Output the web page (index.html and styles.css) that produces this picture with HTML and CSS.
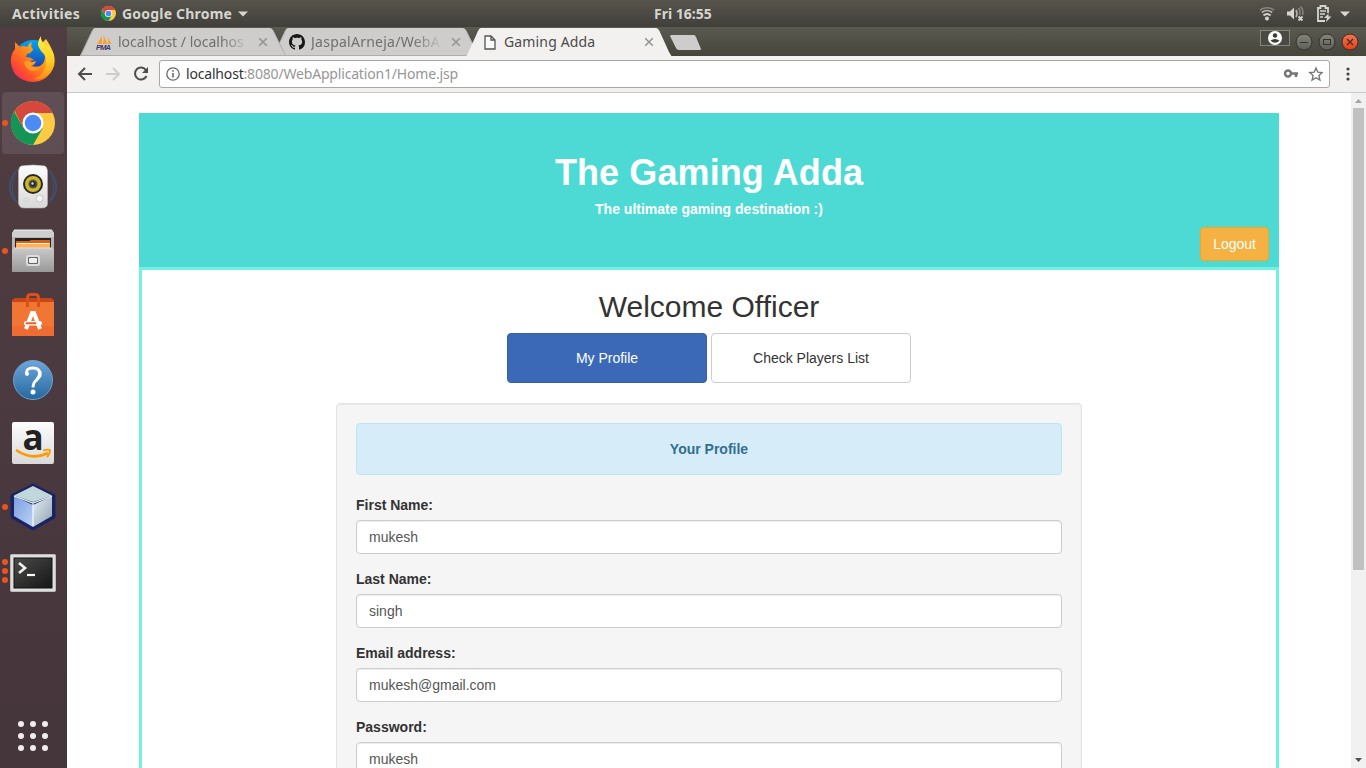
FILE: index.html
```html
<!DOCTYPE html>
<html lang="en">
<head>
<meta charset="utf-8">
<title>Gaming Adda</title>
<link rel="stylesheet" href="styles.css">
</head>
<body>
<svg width="0" height="0" class="defs">
  <defs>
    <symbol id="chrome" viewBox="0 0 44 44">
      <circle cx="22" cy="22" r="22" fill="#fccb43"/>
      <path d="M3.200 10.500A22 22 0 0 0 22 44L31.500 27.500 22 22 12.500 27Z" fill="#149556"/>
      <path d="M3.600 10 13 28 22 22V12H41.600A22 22 0 0 0 3.600 10Z" fill="#d5493c"/>
      <circle cx="22" cy="22" r="10.500" fill="#fff"/>
      <circle cx="22" cy="22" r="8.300" fill="#4c8bf5"/>
    </symbol>
    <symbol id="close" viewBox="0 0 10 10"><path d="M1.200 1.200 8.800 8.800M8.800 1.200 1.200 8.800" stroke="#949392" stroke-width="1.500"/></symbol>
    <symbol id="tab-shape" viewBox="0 0 208 29"><path d="M0 28.500C1.500 28 1.500 27 2.500 25L12 4Q13.200 1 15 1H190Q192 1 193.500 4L203 24.500 205.500 28.500Z" fill="#cfcdcb"/><path d="M.5 28.500 12.500 3.500M193 3.500 205.500 28.500M0 28.500H206" fill="none" stroke="#aeadab"/></symbol>
    <linearGradient id="fox" x1="1" y1="0" x2="0" y2="1"><stop offset="0" stop-color="#fff04a"/><stop offset=".4" stop-color="#ff9a18"/><stop offset=".75" stop-color="#ff4a2f"/><stop offset="1" stop-color="#e3168a"/></linearGradient>
    <linearGradient id="globe" x1="0" y1="0" x2="0" y2="1"><stop offset="0" stop-color="#00a5f5"/><stop offset="1" stop-color="#2a1f8c"/></linearGradient>
    <linearGradient id="flame" x1="0" y1="0" x2="0" y2="1"><stop offset="0" stop-color="#fff04a"/><stop offset=".6" stop-color="#ffcb20"/><stop offset="1" stop-color="#ff8b16"/></linearGradient>
    <linearGradient id="silver" x1="0" y1="0" x2="0" y2="1"><stop offset="0" stop-color="#c9c9c9"/><stop offset="1" stop-color="#999999"/></linearGradient>
    <linearGradient id="white" x1="0" y1="0" x2="0" y2="1"><stop offset="0" stop-color="#fdfdfd"/><stop offset="1" stop-color="#d9d9d9"/></linearGradient>
    <linearGradient id="help" x1="0" y1="0" x2="0" y2="1"><stop offset="0" stop-color="#6fa5da"/><stop offset="1" stop-color="#2369a0"/></linearGradient>
    <linearGradient id="cubeL" x1="0" y1="0" x2="1" y2="1"><stop offset="0" stop-color="#7b9ee0"/><stop offset="1" stop-color="#bdd3f7"/></linearGradient>
    <linearGradient id="cubeR" x1="0" y1="0" x2="1" y2="1"><stop offset="0" stop-color="#e6eef4"/><stop offset="1" stop-color="#8fa3b0"/></linearGradient>
    <linearGradient id="term" x1="0" y1="0" x2="1" y2="1"><stop offset="0" stop-color="#4b4c4a"/><stop offset="1" stop-color="#151615"/></linearGradient>
    <linearGradient id="knob" x1="0" y1="0" x2="0" y2="1"><stop offset="0" stop-color="#84847c"/><stop offset="1" stop-color="#60605a"/></linearGradient>
    <linearGradient id="redknob" x1="0" y1="0" x2="0" y2="1"><stop offset="0" stop-color="#f4744f"/><stop offset="1" stop-color="#ee3d13"/></linearGradient>
  </defs>
</svg>

<div class="desktop">
  <header class="topbar">
    <span class="activities">Activities</span>
    <svg class="mini-chrome" width="15" height="15"><use href="#chrome"/></svg>
    <span class="app-name">Google Chrome</span>
    <svg class="app-arrow" width="10" height="6"><path d="M0 .5H10L5 5.500Z" fill="#d6d5cf"/></svg>
    <span class="clock">Fri 16:55</span>
    <svg class="tray" width="94" height="18" viewBox="0 0 94 18" fill="none">
      <circle cx="7" cy="13.500" r="2" fill="#d6d5cf"/>
      <path d="M3.500 10.500Q7 7.500 10.500 10.500" stroke="#d6d5cf" stroke-width="2"/>
      <path d="M1.800 7.500Q7 3.500 12.200 7.500" stroke="#b5b4ae" stroke-width="1.600"/>
      <path d="M0 5Q7 .5 14 5" stroke="#86857f" stroke-width="1.500"/>
      <path d="M27 6.500H30L34 2.500V14.500L30 10.500H27Z" fill="#d6d5cf"/>
      <path d="M36 5Q38 8.500 36 12" stroke="#b5b4ae" stroke-width="1.600"/>
      <path d="M38.500 3Q41 7 39.500 10M40.500 1.500Q44 5 42.500 10" stroke="#86857f" stroke-width="1.500"/>
      <path d="M38.500 11.500 42.500 15.500M42.500 11.500 38.500 15.500" stroke="#d6d5cf" stroke-width="1.800"/>
      <path d="M65 16H58V3H60.500V1H65.500V3H68V8" stroke="#d6d5cf" stroke-width="1.800"/>
      <path d="M60 6H66M60 9H65M60 12H63" stroke="#d6d5cf" stroke-width="1.600"/>
      <path d="M68.500 8.500 64 13H67L66 17 71.500 11.500H68.500Z" fill="#d6d5cf"/>
      <path d="M80 6.500H90L85 11.500Z" fill="#d6d5cf"/>
    </svg>
  </header>

  <div class="workspace">
    <nav class="dock">
      <div class="app">
        <svg width="46" height="48" viewBox="0 0 46 48">
          <circle cx="23" cy="24" r="19" fill="url(#globe)"/>
          <path d="M5 7Q8 10 10 12Q13 10 17 12Q19 8 22 7Q20 12 23 14L23 15Q21 18 17 19L16 22Q21 22 24 25Q19 26 18 28Q22 33 30 31Q36 28 35 18L32 8L36 4Q47 20 44 31Q38 47 22 47Q3 45 1 28Q0 20 5 14Z" fill="url(#fox)"/>
          <path d="M31 1Q30 7 38 11Q46 17 44 29Q43 36 38 40Q33 45 24 44Q35 40 36 29Q37 21 31 16Q25 9 31 1Z" fill="url(#flame)"/>
          <path d="M14 27Q18 25 22 27L26 26Q25 30 21 31Q26 34 31 31Q27 38 19 35Q15 32 14 27Z" fill="#ff9b22"/>
        </svg>
      </div>
      <div class="app active"><i class="dots"><b></b></i>
        <svg width="44" height="44"><use href="#chrome"/></svg>
      </div>
      <div class="app">
        <svg width="50" height="46" viewBox="0 0 50 46">
          <path d="M7 8Q-4 23 7 37M5 11Q-1 23 5 34M9 5Q0 23 9 39M43 8Q54 23 43 37M45 11Q51 23 45 34M41 5Q50 23 41 39" fill="none" stroke="#3d5173" stroke-width="1.200"/>
          <path d="M13 2Q25 0 37 2Q39 3 39.500 7V40Q39 44 34 44H16Q11 44 10.500 39V7Q11 3 13 2Z" fill="url(#white)" stroke="#b5b5b5" stroke-width=".6"/>
          <circle cx="25" cy="20" r="10" fill="#26282b"/><circle cx="25" cy="20" r="8" fill="#d0b629"/><circle cx="25" cy="20" r="4.600" fill="#55564b"/><circle cx="25" cy="20" r="2.800" fill="#252a31"/><circle cx="24.500" cy="19.500" r="1.200" fill="#ddd"/>
          <circle cx="31.500" cy="34.500" r="3.500" fill="#f4f4f4" stroke="#c5c5c5"/><path d="M16 34H20V38H16Z" fill="none" stroke="#d4d4d4"/>
        </svg>
      </div>
      <div class="app"><i class="dots"><b></b></i>
        <svg width="44" height="46" viewBox="0 0 44 46">
          <path d="M3 2H41L43 5V42H1V5Z" fill="#b5b5b5"/><path d="M3 2H41L43 5V9H1V5Z" fill="#cfcfcf"/><path d="M3 2H41" stroke="#eee"/>
          <rect x="4" y="10" width="36" height="10" fill="#252423"/>
          <path d="M5 13H18L20 12H39V20H5Z" fill="#d85f18"/><rect x="5" y="15" width="34" height="5" fill="#ffb15c"/><path d="M6 15.500H38" stroke="#fff2d9"/>
          <path d="M3 20H41L43 22V44H1V22Z" fill="url(#silver)"/><path d="M3 20H41" stroke="#dedede"/>
          <rect x="15" y="27" width="14" height="11" rx="2.500" fill="#ddd"/><rect x="17" y="29" width="10" height="7" rx="1" fill="#666"/><rect x="18" y="30" width="8" height="5" rx="1" fill="#eee"/>
        </svg>
      </div>
      <div class="app">
        <svg width="42" height="44" viewBox="0 0 42 44">
          <path d="M0 7H42V43H0Z" fill="#ee6c31"/><path d="M0 9H42V33H0Z" fill="#f17634"/><path d="M0 7 3 5H39L42 7V9H0Z" fill="#c74715"/>
          <path d="M15.500 14V5Q15.500 1.500 19 1.500H23Q26.500 1.500 26.500 5V14" fill="none" stroke="#df4f18" stroke-width="3"/>
          <path d="M14 36 20 20H22L28 36" fill="none" stroke="#fff" stroke-width="4"/><rect x="12" y="28" width="18" height="4.500" rx="2.200" fill="#fff"/><rect x="13.500" y="29.300" width="11" height="2" rx="1" fill="#ec6227"/>
        </svg>
      </div>
      <div class="app">
        <svg class="help" width="42" height="42" viewBox="0 0 42 42"><circle cx="21" cy="21" r="19.500" fill="url(#help)" stroke="#729fca"/><path d="M14.300 14.500Q14 9 21 9Q27.500 9 27.500 14.500Q27.500 18 24 21.500Q21 24 21 28.500" fill="none" stroke="#fff" stroke-width="2.800"/><path d="M25 10Q30 12 28.500 17L24.500 22" fill="none" stroke="#fff" stroke-width="2"/><circle cx="15" cy="14.800" r="2.100" fill="#fff"/><circle cx="21" cy="33" r="2.500" fill="#fff"/></svg>
      </div>
      <div class="app">
        <svg width="42" height="42" viewBox="0 0 42 42"><rect width="42" height="42" rx="2" fill="url(#white)"/><text x="10.500" y="28" class="amazon">a</text><path d="M4 28Q20 39 36 31" fill="none" stroke="#ff9900" stroke-width="2.600"/><path d="M31 28.500Q36 27 38 28Q38 32 35 35" fill="none" stroke="#ff9900" stroke-width="1.800"/></svg>
      </div>
      <div class="app"><i class="dots"><b></b></i>
        <svg width="46" height="48" viewBox="0 0 46 48"><path d="M23 2 44 12.500V34L23 46 2 34V12.500Z" fill="#1b2364" stroke="#1b2364" stroke-width="3" stroke-linejoin="round"/><path d="M4 13 23 22V44L4 33Z" fill="url(#cubeL)"/><path d="M23 22 42 13V33L23 44Z" fill="url(#cubeR)"/><path d="M23 3 42 12.500 23 19 4 12.500Z" fill="#c0d8da"/><path d="M4 13 23 20 42 13M23 20V43" fill="none" stroke="#edf8ff" stroke-width="1.300"/></svg>
      </div>
      <div class="app"><i class="dots"><b></b><b></b><b></b></i>
        <svg class="terminal" width="46" height="38" viewBox="0 0 46 38"><rect x=".5" y=".5" width="45" height="37" rx="1" fill="#dedede" stroke="#bbb"/><rect x="4" y="4" width="38" height="30" fill="url(#term)" stroke="#111"/><path d="M9 9 15 14 9 19" fill="none" stroke="#eee" stroke-width="2.700"/><path d="M17 21H25" stroke="#fff" stroke-width="2.200"/></svg>
      </div>
      <div class="grid-launcher"><b></b><b></b><b></b><b></b><b></b><b></b><b></b><b></b><b></b></div>
    </nav>

    <main class="browser">
      <div class="tabstrip">
        <div class="tab first">
          <svg class="shape" width="208" height="29"><use href="#tab-shape"/></svg>
          <svg class="fav" width="16" height="16" viewBox="0 0 16 16"><path d="M1 10 6 2V10ZM6.500 10Q8.500 5 7.500 1L11.500 10ZM12 10Q12.500 6 11.500 3L15.500 10Z" fill="#f7a034"/><text x="0" y="15.500" class="pma" textLength="15">PMA</text></svg>
          <span class="tab-title fade">localhost / localhos</span>
          <svg class="x" width="10" height="10"><use href="#close"/></svg>
        </div>
        <div class="tab second">
          <svg class="shape" width="208" height="29"><use href="#tab-shape"/></svg>
          <svg class="fav" width="16" height="16" viewBox="0 0 16 16"><path fill="#191717" d="M8 0C3.580 0 0 3.580 0 8c0 3.540 2.290 6.530 5.470 7.590.4.070.55-.17.55-.38 0-.19-.01-.82-.01-1.490-2.010.37-2.530-.49-2.690-.94-.09-.23-.48-.94-.82-1.130-.28-.15-.68-.52-.01-.53.63-.01 1.080.58 1.230.82.72 1.210 1.870.87 2.330.66.070-.52.280-.87.510-1.070-1.780-.2-3.640-.89-3.640-3.950 0-.87.310-1.590.82-2.150-.08-.2-.36-1.020.08-2.120 0 0 .67-.21 2.200.82.640-.18 1.320-.27 2-.27s1.360.09 2 .27c1.530-1.040 2.200-.82 2.200-.82.440 1.100.160 1.920.080 2.120.510.560.820 1.270.820 2.150 0 3.070-1.870 3.750-3.650 3.950.290.250.540.730.540 1.480 0 1.070-.010 1.930-.010 2.200 0 .21.150.46.550.38A8 8 0 0 0 16 8c0-4.420-3.580-8-8-8z"/></svg>
          <span class="tab-title fade">JaspalArneja/WebA</span>
          <svg class="x" width="10" height="10"><use href="#close"/></svg>
        </div>
        <div class="tab current">
          <svg class="shape" width="208" height="29" viewBox="0 0 208 29"><path d="M0 29C1.500 28 1.500 27 2.500 25L12 4Q13.200 1 15 1H190Q192 1 193.500 4L203 25 205.500 29Z" fill="#f2f1f0"/></svg>
          <svg class="fav" width="12" height="15" viewBox="0 0 12 15"><path d="M1 1H7L11 5V14H1ZM7 1V5H11" fill="#fafafa" stroke="#555" stroke-width="1.300"/></svg>
          <span class="tab-title">Gaming Adda</span>
          <svg class="x" width="10" height="10"><use href="#close"/></svg>
        </div>
        <svg class="newtab" width="34" height="17" viewBox="0 0 34 17"><path d="M2 1H25Q26 1 27 3L32 15Q32 16 31 16H10Q8 16 7 14L1 2Z" fill="#cfcdcb"/></svg>
        <svg class="winbuttons" width="104" height="28" viewBox="0 0 104 28" fill="none">
          <rect x="4.500" y="3.500" width="29" height="15" fill="#4a4a42" stroke="#85857d"/>
          <circle cx="19" cy="11" r="7" fill="#fff"/><circle cx="19" cy="8.500" r="2.200" fill="#3c3b37"/><path d="M14.500 13.500Q19 10.500 23.500 13.500Q19 18 14.500 13.500Z" fill="#3c3b37"/>
          <g stroke="#33332e"><circle cx="48" cy="15" r="8" fill="url(#knob)"/><path d="M44 15.500H52"/><circle cx="71" cy="15" r="8" fill="url(#knob)"/><rect x="67.500" y="12.500" width="7" height="5"/><circle cx="94" cy="15" r="8" fill="url(#redknob)"/><path d="M91 12 97 18M97 12 91 18" stroke-width="1.300"/></g>
        </svg>
      </div>
      <div class="toolbar">
        <svg class="navicons" width="76" height="18" viewBox="0 0 76 18" fill="none" stroke-width="2">
          <path d="M17 9H4M10 3 4 9 10 15" stroke="#4d4d4d"/><path d="M31 9H44M38 3 44 9 38 15" stroke="#cecdcc"/><path d="M71 5.200A6 6 0 1 0 71.500 11" stroke="#4d4d4d"/><path d="M73 2V8H67Z" fill="#4d4d4d"/>
        </svg>
        <div class="address">
          <svg width="14" height="14" viewBox="0 0 14 14" fill="none" stroke="#666"><circle cx="7" cy="7" r="6.200" stroke-width="1.300"/><path d="M7 6V10.500M7 3.300V4.800" stroke-width="1.600"/></svg>
          <span class="url"><span class="host">localhost</span>:8080/WebApplication1/Home.jsp</span>
          <svg class="addr-icons" width="40" height="16" viewBox="0 0 40 16" fill="none"><circle cx="5" cy="7.500" r="3" stroke="#757575" stroke-width="2.400"/><path d="M8 7.500H15M13 8V11" stroke="#757575" stroke-width="2.600"/><path d="M33 2 34.800 6.200 39.200 6.600 35.900 9.600 36.900 14 33 11.700 29.100 14 30.100 9.600 26.800 6.600 31.200 6.200Z" stroke="#757575" stroke-width="1.400"/></svg>
        </div>
        <svg class="menu" width="4" height="14" viewBox="0 0 4 14" fill="#444"><circle cx="2" cy="2" r="1.600"/><circle cx="2" cy="7" r="1.600"/><circle cx="2" cy="12" r="1.600"/></svg>
      </div>
      <div class="viewport">
        <div class="page">
          <section class="banner">
            <h1>The Gaming Adda</h1>
            <p>The ultimate gaming destination :)</p>
            <button class="btn logout">Logout</button>
          </section>
          <section class="content">
            <h2>Welcome Officer</h2>
            <div class="choices"><button class="btn wide primary">My Profile</button><button class="btn wide">Check Players List</button></div>
            <form class="well">
              <div class="alert">Your Profile</div>
              <label for="fn">First Name:</label><input id="fn" value="mukesh">
              <label for="ln">Last Name:</label><input id="ln" value="singh">
              <label for="em">Email address:</label><input id="em" value="mukesh@gmail.com">
              <label for="pw">Password:</label><input id="pw" value="mukesh">
            </form>
          </section>
        </div>
        <div class="scrollbar">
          <svg width="15" height="15"><path d="M4 10H11L7.500 6Z" fill="#a3a3a3"/></svg>
          <div class="thumb"></div>
          <svg class="down" width="15" height="15"><path d="M4 5H11L7.500 9Z" fill="#505050"/></svg>
        </div>
      </div>
    </main>
  </div>
</div>
</body>
</html>
```
FILE: styles.css
```css
* { box-sizing: border-box; }
body { margin: 0; overflow: hidden; font: 14px/20px "Liberation Sans", Arial, sans-serif; color: #333; }
svg { display: block; flex: none; }
.defs { position: absolute; }
.desktop { width: 1366px; height: 768px; display: flex; flex-direction: column; overflow: hidden; }

.topbar { height: 27px; flex: none; display: grid; grid-template-columns: 89px 21px 116px 416px 1fr 94px; align-items: center; padding: 0 12px; background: linear-gradient(#57544c, #403f3a); color: #d6d5cf; font: bold 14px/27px "Noto Sans", sans-serif; white-space: nowrap; }
.activities { letter-spacing: .3px; }
.app-name { letter-spacing: .2px; }
.workspace { flex: 1; display: flex; min-height: 0; }

.dock { width: 67px; flex: none; background: linear-gradient(#503d42, #45363b); display: flex; flex-direction: column; }
.app { height: 64px; flex: none; display: flex; align-items: center; justify-content: center; position: relative; }
.app svg { margin-right: 1px; }
.app.active { height: 62px; margin: 1px 3px 1px 2px; border-radius: 4px; background: #5f4e54; }
.app.active svg { margin-right: 0; }
.dots { position: absolute; left: 2px; top: 0; height: 100%; display: flex; flex-direction: column; justify-content: center; gap: 3px; }
.active .dots { left: 0; }
.dots b { width: 6px; height: 6px; border-radius: 50%; background: #e95420; }
.help { transform: translateY(1px); }
.terminal { transform: translateY(2px); }
.amazon { font: bold 35px "Open Sans", sans-serif; fill: #222; }
.grid-launcher { margin: auto 0 17px 18px; display: grid; grid-template-columns: repeat(3, 6px); gap: 6px; }
.grid-launcher b { width: 6px; height: 6px; border-radius: 50%; background: #eeeeec; }

.browser { flex: 1; min-width: 0; display: flex; flex-direction: column; background: #fff; }
.tabstrip { height: 29px; flex: none; display: flex; padding-left: 13px; background: linear-gradient(#5b5a50, #45453c); }
.tab { width: 206px; flex: none; height: 29px; position: relative; display: flex; align-items: center; padding: 1px 18px 0 16px; font: 14px/20px "Noto Sans", sans-serif; color: #716f6d; }
.tab + .tab { margin-left: -13px; }
.tab.first { z-index: 1; }
.tab.second { z-index: 0; }
.tab.current { z-index: 2; color: #4c4b4a; padding-left: 18px; }
.shape { position: absolute; left: 0; top: 0; z-index: -1; }
.tab-title { width: 132px; margin-left: 6px; white-space: nowrap; }
.current .tab-title { margin-left: 8px; letter-spacing: .15px; }
.fade { -webkit-mask-image: linear-gradient(90deg, #000 78%, transparent); mask-image: linear-gradient(90deg, #000 78%, transparent); }
.second .tab-title { letter-spacing: .25px; }
.x { margin-left: auto; }
.pma { font: italic bold 7.5px "Liberation Sans", sans-serif; fill: #3b3768; }
.newtab { margin: 7px 0 0 -3px; }
.winbuttons { margin-left: auto; margin-right: 6px; }

.toolbar { height: 37px; flex: none; display: flex; align-items: center; background: #f2f1f0; border-bottom: 1px solid #cbcac9; padding: 0 16px 0 8px; }
.navicons { margin-right: 8px; }
.address { width: 1171px; height: 28px; border: 1px solid #a9a8a7; border-radius: 3px; background: #fff; display: flex; align-items: center; padding: 0 6px; }
.url { margin-left: 6px; font: 14px/26px "Noto Sans", sans-serif; color: #969696; letter-spacing: -.18px; }
.host { color: #333; }
.addr-icons { margin-left: auto; }
.menu { margin-left: auto; }

.viewport { flex: 1; min-height: 0; display: flex; overflow: hidden; }
.page { width: 1140px; height: 900px; margin: 20px auto 0; flex: none; }
.banner { height: 154px; padding: 40px 10px 0; background: #4ddad5; color: #fff; text-align: center; }
h1 { margin: 0; font-size: 36px; line-height: 40px; letter-spacing: .1px; }
.banner p { margin: 6px 0 8px; font-weight: bold; }
.btn { font: 14px/20px "Liberation Sans", Arial, sans-serif; border: 1px solid #ccc; border-radius: 4px; background: #fff; color: #333; padding: 6px 12px; }
.logout { display: block; margin-left: auto; background: #f5b243; border-color: #f0a727; color: #fff; }
.content { border: 3px solid #70f2e0; height: 740px; padding-top: 20px; }
h2 { margin: 0 0 10px; font-size: 30px; line-height: 33px; font-weight: normal; text-align: center; }
.choices { display: flex; justify-content: center; gap: 4px; }
.wide { width: 200px; height: 50px; }
.primary { background: #3b69b7; border-color: #3560a9; color: #fff; }
.well { width: 746px; height: 700px; margin: 20px auto 0; padding: 19px; border: 1px solid #e3e3e3; border-radius: 4px; background: #f5f5f5; box-shadow: inset 0 1px 1px rgba(0,0,0,.05); }
.alert { height: 52px; padding: 15px; margin-bottom: 20px; border: 1px solid #b6e8f2; border-radius: 4px; background: #d6ecf8; color: #31708f; font-weight: bold; text-align: center; }
label { display: block; font-weight: bold; margin-bottom: 5px; }
input { display: block; width: 100%; height: 34px; margin: 0 0 15px; padding: 6px 12px; border: 1px solid #ccc; border-radius: 4px; background: #fff; color: #555; font: 14px/20px "Liberation Sans", Arial, sans-serif; box-shadow: inset 0 1px 1px rgba(0,0,0,.075); }
.scrollbar { width: 15px; flex: none; background: #f1f1f1; display: flex; flex-direction: column; align-items: center; }
.thumb { width: 11px; height: 462px; background: #c1c1c1; }
.down { margin-top: auto; }
```
